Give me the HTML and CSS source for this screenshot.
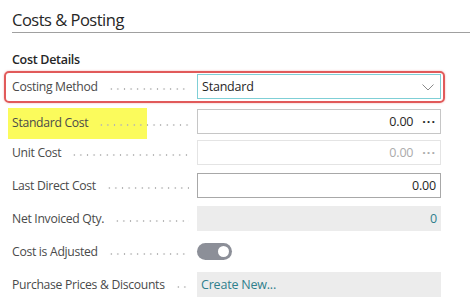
FILE: index.html
```html
<!DOCTYPE html>
<html lang="en">
<head>
    <meta charset="UTF-8">
    <meta name="viewport" content="width=device-width, initial-scale=1.0">
    <title>Costs &amp; Posting</title>
    <link rel="stylesheet" href="styles.css">
</head>
<body>
    <div class="page">
        <h1 class="title">Costs &amp; Posting</h1>
        <h2 class="group">Cost Details</h2>

        <div class="field focused">
            <div class="label"><span>Costing Method</span><i class="leader"></i></div>
            <div class="input select">
                <span>Standard</span>
                <svg class="chevron" width="12" height="7" viewBox="0 0 12 7">
                    <path d="M0.5 0.5 L6 6 L11.5 0.5" fill="none" stroke="#8a8a8a" stroke-width="1"/>
                </svg>
            </div>
        </div>

        <div class="field">
            <div class="label marked"><span>Standard Cost</span><i class="leader"></i></div>
            <div class="input number">
                <span>0.00</span><span class="more">&middot;&middot;&middot;</span>
            </div>
        </div>

        <div class="field">
            <div class="label"><span>Unit Cost</span><i class="leader"></i></div>
            <div class="input number disabled">
                <span>0.00</span><span class="more">&middot;&middot;&middot;</span>
            </div>
        </div>

        <div class="field">
            <div class="label"><span>Last Direct Cost</span><i class="leader"></i></div>
            <div class="input number strong">
                <span>0.00</span>
            </div>
        </div>

        <div class="field">
            <div class="label"><span>Net Invoiced Qty.</span><i class="leader"></i></div>
            <div class="input readonly number">
                <span class="link">0</span>
            </div>
        </div>

        <div class="field">
            <div class="label"><span>Cost is Adjusted</span><i class="leader"></i></div>
            <div class="toggle"><i class="knob"></i></div>
        </div>

        <div class="field">
            <div class="label"><span>Purchase Prices &amp; Discounts</span><i class="leader"></i></div>
            <div class="input readonly">
                <span class="link">Create New...</span>
            </div>
        </div>
    </div>
</body>
</html>
```

FILE: styles.css
```css
body {
    margin: 0;
    background: #fff;
    font-family: "Open Sans", "Noto Sans", sans-serif;
    color: #333;
}
.page {
    padding: 8px 4px 0 12px;
}
.title {
    margin: 0;
    font-size: 16.5px;
    font-weight: 400;
    line-height: 24px;
    color: #262626;
    border-bottom: 1px solid #a0a0a0;
    letter-spacing: -0.5px;
}
.group {
    margin: 19px 0 2px;
    font-size: 12.5px;
    font-weight: 600;
    line-height: 16px;
    color: #262626;
    letter-spacing: -0.3px;
}
.field {
    position: relative;
    display: grid;
    grid-template-columns: 185px 244px;
    align-items: center;
    height: 33px;
}
.focused::after {
    content: "";
    position: absolute;
    top: 1px;
    bottom: 0;
    left: -8px;
    right: 25px;
    border: 2px solid #e15a5a;
    border-radius: 5px;
    box-shadow: 0 0 2px rgba(225, 90, 90, 0.5);
    pointer-events: none;
}
.label {
    display: flex;
    align-items: center;
    height: 100%;
    font-size: 12.2px;
    color: #4a4a4a;
    letter-spacing: -0.3px;
    white-space: nowrap;
}
.label.marked {
    margin-left: -4px;
    padding-left: 4px;
    margin-top: 5px;
    padding-bottom: 3px;
    height: 28px;
    background: linear-gradient(#fbfb5c, #fbfb5c) no-repeat 0 0 / 139px 100%;
}
.leader {
    flex: 1;
    height: 4px;
    margin: 5px 8px 0 10px;
    background-image: radial-gradient(circle, #b4b4b4 0.7px, transparent 1.1px);
    background-size: 6.6px 4px;
    background-repeat: repeat-x;
}
.input {
    box-sizing: border-box;
    display: flex;
    align-items: center;
    height: 25px;
    padding: 0 4px;
    border: 1px solid #c6c6c6;
    font-size: 12.5px;
    letter-spacing: -0.2px;
    color: #262626;
}
.select {
    justify-content: space-between;
    border-color: #7fcfd6;
    padding-right: 6px;
}
.chevron {
    margin-top: 1px;
}
.number {
    justify-content: flex-end;
}
.more {
    margin-left: 9px;
    letter-spacing: 1px;
    font-weight: 700;
}
.disabled {
    border-color: #e4e4e4;
    color: #ababab;
}
.strong {
    border-color: #a8a8a8;
}
.readonly {
    border: none;
    background: #ececec;
}
.link {
    color: #2f7f8c;
}
.toggle {
    display: flex;
    justify-content: flex-end;
    align-items: center;
    box-sizing: border-box;
    width: 35px;
    height: 17px;
    padding: 0 3px;
    border-radius: 9px;
    background: #8c8f98;
}
.knob {
    width: 11px;
    height: 11px;
    border-radius: 50%;
    background: #fff;
}
```
